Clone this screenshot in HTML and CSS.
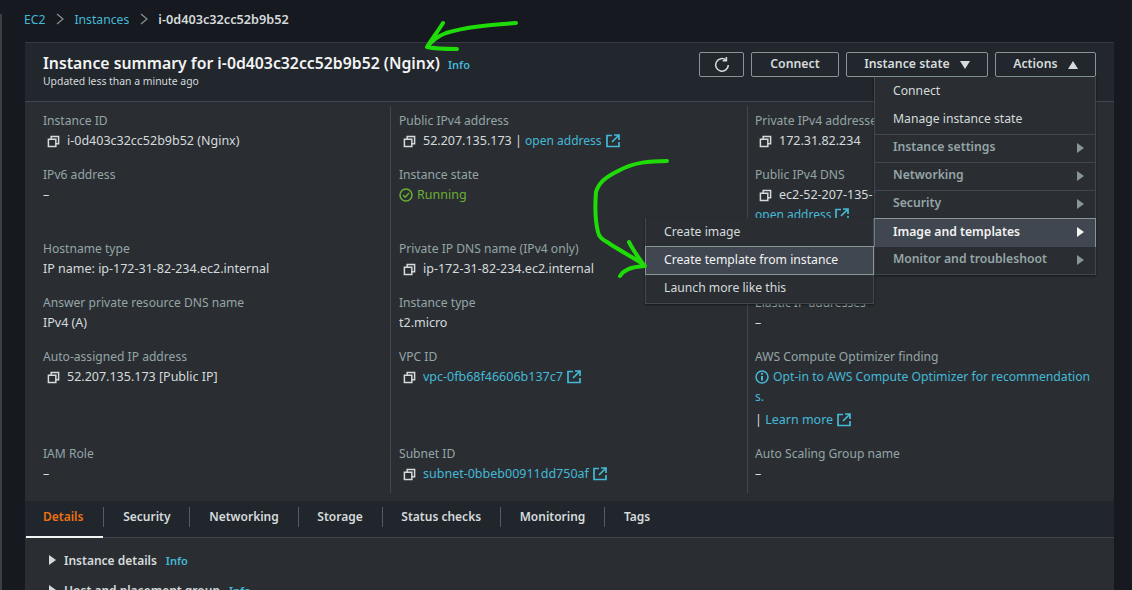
FILE: index.html
```html
<!DOCTYPE html>
<html lang="en">
  <head>
    <meta charset="UTF-8" />
    <title>Instance summary</title>
    <link rel="stylesheet" href="styles.css">
  </head>
  <body>
    <svg class="defs" width="0" height="0">
      <symbol id="copy" viewBox="0 0 14 14">
        <path d="M4.5 4V1.5h8v8H10M1.5 4.5h8v8h-8z" fill="none" stroke="currentColor" stroke-width="1.6"/>
      </symbol>
      <symbol id="ext" viewBox="0 0 14 14">
        <path d="M6 1.5H1v11h12V8M8 1h5v5M13 1L6 8" fill="none" stroke="currentColor" stroke-width="1.7"/>
      </symbol>
    </svg>

    <nav class="crumbs">
      <a href="#">EC2</a>
      <svg class="crumb-sep" width="8" height="12" viewBox="0 0 8 12"><path d="M1 1l6 5-6 5" fill="none" stroke="#879596" stroke-width="1.2"/></svg>
      <a href="#">Instances</a>
      <svg class="crumb-sep" width="8" height="12" viewBox="0 0 8 12"><path d="M1 1l6 5-6 5" fill="none" stroke="#879596" stroke-width="1.2"/></svg>
      <span class="crumb-now">i-0d403c32cc52b9b52</span>
    </nav>

    <div class="panel">
      <header class="head">
        <div class="head-text">
          <h1>Instance summary for i-0d403c32cc52b9b52 (Nginx) <a class="info" href="#">Info</a></h1>
          <p>Updated less than a minute ago</p>
        </div>
        <div class="btns">
          <button class="btn btn-icon">
            <svg width="18" height="18" viewBox="0 0 16 16"><path d="M13.6 8a5.6 5.6 0 1 1-2-4.4M11.9 0.8v3.4H8.6" fill="none" stroke="#d5dbdb" stroke-width="1.4"/></svg>
          </button>
          <button class="btn btn-connect">Connect</button>
          <button class="btn btn-state">Instance state <i class="tri-down"></i></button>
          <button class="btn btn-actions">Actions <i class="tri-up"></i></button>
        </div>
      </header>

      <div class="grid">
        <div class="col">
          <div class="f"><label>Instance ID</label><div class="val"><svg class="ico"><use href="#copy"/></svg>i-0d403c32cc52b9b52 (Nginx)</div></div>
          <div class="f"><label>IPv6 address</label><div class="val">–</div></div>
          <div class="f"><label>Hostname type</label><div class="val">IP name: ip-172-31-82-234.ec2.internal</div></div>
          <div class="f"><label>Answer private resource DNS name</label><div class="val">IPv4 (A)</div></div>
          <div class="f"><label>Auto-assigned IP address</label><div class="val"><svg class="ico"><use href="#copy"/></svg>52.207.135.173 [Public IP]</div></div>
          <div class="f"><label>IAM Role</label><div class="val">–</div></div>
        </div>
        <div class="col">
          <div class="f"><label>Public IPv4 address</label><div class="val"><svg class="ico"><use href="#copy"/></svg>52.207.135.173 <span class="pipe">|</span> <a class="short" href="#">open address</a><svg class="ext"><use href="#ext"/></svg></div></div>
          <div class="f"><label>Instance state</label><div class="val running">
            <svg class="check" width="14" height="14" viewBox="0 0 14 14"><circle cx="7" cy="7" r="6" fill="none" stroke="currentColor" stroke-width="1.5"/><path d="M4 7l2.2 2.2L10 5" fill="none" stroke="currentColor" stroke-width="1.5"/></svg>Running</div></div>
          <div class="f"><label>Private IP DNS name (IPv4 only)</label><div class="val"><svg class="ico"><use href="#copy"/></svg>ip-172-31-82-234.ec2.internal</div></div>
          <div class="f"><label>Instance type</label><div class="val">t2.micro</div></div>
          <div class="f"><label>VPC ID</label><div class="val"><svg class="ico"><use href="#copy"/></svg><a href="#">vpc-0fb68f46606b137c7</a><svg class="ext"><use href="#ext"/></svg></div></div>
          <div class="f"><label>Subnet ID</label><div class="val"><svg class="ico"><use href="#copy"/></svg><a href="#">subnet-0bbeb00911dd750af</a><svg class="ext"><use href="#ext"/></svg></div></div>
        </div>
        <div class="col">
          <div class="f"><label class="clip">Private IPv4 addresses</label><div class="val"><svg class="ico"><use href="#copy"/></svg>172.31.82.234</div></div>
          <div class="f"><label>Public IPv4 DNS</label><div class="val clip"><svg class="ico"><use href="#copy"/></svg>ec2-52-207-135-173.compute-1.amazonaws.com</div><div class="val"><a class="short" href="#">open address</a><svg class="ext"><use href="#ext"/></svg></div></div>
          <div class="f"></div>
          <div class="f"><label>Elastic IP addresses</label><div class="val">–</div></div>
          <div class="f"><label>AWS Compute Optimizer finding</label>
            <div class="val opt">
              <svg class="check" width="14" height="14" viewBox="0 0 14 14"><circle cx="7" cy="7" r="6" fill="none" stroke="currentColor" stroke-width="1.5"/><path d="M7 6v4.4" stroke="currentColor" stroke-width="2"/><circle cx="7" cy="3.9" r="1.1" fill="currentColor"/></svg><a href="#">Opt-in to AWS Compute Optimizer for recommendations.</a>
            </div>
            <div class="val val-3"><span class="pipe">|</span> <a href="#">Learn more</a><svg class="ext"><use href="#ext"/></svg></div>
          </div>
          <div class="f"><label>Auto Scaling Group name</label><div class="val">–</div></div>
        </div>
      </div>

      <div class="tabs">
        <a class="tab on" href="#">Details</a>
        <a class="tab" href="#">Security</a>
        <a class="tab" href="#">Networking</a>
        <a class="tab" href="#">Storage</a>
        <a class="tab" href="#">Status checks</a>
        <a class="tab" href="#">Monitoring</a>
        <a class="tab" href="#">Tags</a>
      </div>

      <div class="sec"><i class="tri-right"></i><b>Instance details</b><a class="info" href="#">Info</a></div>
      <div class="sec"><i class="tri-right"></i><b>Host and placement group</b><a class="info" href="#">Info</a></div>
    </div>

    <!-- menu -->
    <ul class="menu actions-menu">
      <li>Connect</li>
      <li>Manage instance state</li>
      <li class="sub">Instance settings</li>
      <li class="sub">Networking</li>
      <li class="sub">Security</li>
      <li class="sub sel">Image and templates</li>
      <li class="sub">Monitor and troubleshoot</li>
    </ul>
    <ul class="menu image-menu">
      <li>Create image</li>
      <li class="hov">Create template from instance</li>
      <li>Launch more like this</li>
    </ul>

    <svg class="ink" width="1132" height="590" viewBox="0 0 1132 590">
      <path d="M516 23C490 25 465 27 446 33C438 36 432 41 427 47C436 49 447 49 457 49M443 23C438 31 432 39 427 47"/>
      <path d="M667 161C650 161 634 162 618 171C606 177 599 182 596 192C595 205 595 220 598 232C599 238 604 240 610 244C621 251 632 257 643 264M629 242C633 250 638 257 643 264M620 276C624 270 630 267 645 266"/>
    </svg>
  </body>
</html>
```

FILE: styles.css
```css
* {
  box-sizing: border-box;
  margin: 0;
  padding: 0;
  list-style: none;
}
html, body {
  height: 590px;
  overflow: hidden;
}
body {
  background-color: #16191f;
  color: #d5dbdb;
  font-family: "Noto Sans", "Liberation Sans", sans-serif;
  font-size: 12.5px;
  position: relative;
  padding-left: 25px;
}
/* thin strip at the left edge of the window */
body::before {
  content: "";
  position: absolute;
  left: 0;
  top: 14px;
  bottom: 0;
  width: 2px;
  background-color: #3a3f44;
}
a {
  color: #44b9d6;
  text-decoration: none;
}
.defs {
  position: absolute;
}

/* breadcrumb */
.crumbs {
  height: 42px;
  display: flex;
  align-items: center;
  padding-bottom: 4px;
  margin-left: -1px;
  gap: 10.5px;
  font-size: 12.2px;
}
.crumb-now {
  font-weight: 600;
  font-size: 12.7px;
}

.panel {
  width: 1089px;
  height: 548px;
  background-color: #2a2e33;
  overflow: hidden;
}

/* header */
.head {
  height: 60px;
  background-color: #22262d;
  border-top: 1px solid #353a40;
  border-bottom: 1px solid #414750;
  display: flex;
  justify-content: space-between;
  padding: 9px 18px 0 18px;
}
.head h1 {
  font-size: 15.8px;
  font-weight: 600;
  color: #f2f3f3;
  line-height: 18px;
  margin-top: 2px;
  white-space: nowrap;
}
.head p {
  font-size: 10.4px;
  line-height: 14px;
}
.info {
  font-size: 11px;
  font-weight: 600;
  margin-left: 4px;
}
.btns {
  display: flex;
  gap: 7px;
  height: 25px;
}
.btn {
  height: 25px;
  padding-bottom: 3px;
  background: transparent;
  border: 1px solid #879596;
  border-radius: 2px;
  color: #d5dbdb;
  font-family: inherit;
  font-size: 12.3px;
  font-weight: 600;
}
.btn-icon {
  width: 45px;
  display: flex;
  align-items: center;
  justify-content: center;
  padding-bottom: 0;
}
.btn-connect { width: 88px; }
.btn-state { width: 142px; }
.btn-actions { width: 101px; }
.tri-down, .tri-up {
  display: inline-block;
  margin-left: 7px;
  border-left: 5px solid transparent;
  border-right: 5px solid transparent;
  vertical-align: -1px;
}
.tri-down { border-top: 8px solid #d5dbdb; }
.tri-up { border-bottom: 8px solid #d5dbdb; }

/* details */
.grid {
  height: 399px;
  display: grid;
  grid-template-columns: 365px 357px 1fr;
  padding: 4px 0 8px;
}
.col {
  display: grid;
  grid-template-rows: 54px 74px 54px 54px 97px 1fr;
  padding: 5px 0 0 18px;
  border-left: 1px solid #414750;
}
.col:first-child { border-left: 0; }
.col + .col { padding-left: 8px; }
.col + .col + .col { padding-left: 7px; }
.f label {
  display: block;
  color: #95a5a6;
  font-size: 12.1px;
  line-height: 20px;
}
.val {
  line-height: 20px;
  height: 20px;
  white-space: nowrap;
}
.clip {
  width: 119px;
  overflow: hidden;
  white-space: nowrap;
}
.ico {
  width: 13px;
  height: 13px;
  margin: 0 7px 0 4px;
  vertical-align: -3px;
  color: #d5dbdb;
}
.ext {
  width: 14px;
  height: 14px;
  margin-left: 4px;
  vertical-align: -3px;
  color: #44b9d6;
}
.short { font-size: 12px; }
.pipe { color: #d5dbdb; }
.running { color: #6aaf35; }
.check {
  margin-right: 4px;
  vertical-align: -3px;
}
.opt {
  height: 40px;
  color: #44b9d6;
  font-size: 12.2px;
  white-space: normal;
  width: 339px;
  word-break: break-all;
}
.val-3 { margin-top: 3px; }

/* tabs */
.tabs {
  height: 37px;
  padding-bottom: 4px;
  display: flex;
  align-items: center;
  background-color: #21252c;
  border-bottom: 1px solid #414750;
  position: relative;
}
.tab {
  color: #d5dbdb;
  font-weight: 600;
  font-size: 12px;
  line-height: 20px;
  padding: 0 18.8px;
  border-left: 1px solid #545b64;
}
.tab.on {
  color: #ec7211;
  border-left: 0;
  padding: 0 20px 0 18px;
}
.tab.on::after {
  content: "";
  position: absolute;
  left: 1px;
  bottom: -1px;
  width: 77px;
  height: 2px;
  background-color: #f2f3f3;
}

/* sections */
.sec {
  height: 30px;
  margin-top: 7px;
  padding-left: 24px;
  display: flex;
  align-items: center;
  gap: 5px;
  font-size: 12px;
}
.sec b { font-weight: 600; }
.sec + .sec { margin-top: 0; }
.tri-right {
  border-top: 5px solid transparent;
  border-bottom: 5px solid transparent;
  border-left: 7px solid #d5dbdb;
  margin-right: 3px;
}

/* dropdown menus */
.menu {
  position: absolute;
  background-color: #2a2e33;
  border: 1px solid #414750;
  border-top: 0;
  box-shadow: 0 1px 2px rgba(0, 0, 0, 0.5);
  font-size: 12.2px;
}
.actions-menu {
  left: 874px;
  top: 77px;
  width: 222px;
}
.image-menu {
  left: 645px;
  top: 218px;
  width: 229px;
}
.menu li {
  height: 28px;
  line-height: 27px;
  padding-left: 18px;
  position: relative;
}
.menu li:nth-child(2) { margin-bottom: 1px; }
.image-menu li:nth-child(2) { margin-bottom: 0; }
.image-menu li:last-child { line-height: 26px; }
.menu .sub {
  color: #95a5a6;
  font-weight: 600;
  border-top: 1px solid #414750;
  line-height: 24px;
}
.menu .sub::after {
  content: "";
  position: absolute;
  right: 11px;
  top: 8px;
  border-top: 5px solid transparent;
  border-bottom: 5px solid transparent;
  border-left: 7px solid #879596;
}
.menu .sel, .menu .hov {
  background-color: #414750;
  border: 1px solid #879596;
  color: #f2f3f3;
  margin: 0 -1px;
}
.menu .sel { height: 29px; margin-bottom: -1px; line-height: 25px; }
.menu .sel::after { border-left-color: #f2f3f3; }
.menu .hov {
  height: 29px;
  margin-bottom: -1px;
  line-height: 25px;
}

/* green marker arrows */
.ink {
  position: absolute;
  left: 0;
  top: 0;
  pointer-events: none;
}
.ink path {
  fill: none;
  stroke: #1fdc08;
  stroke-width: 4;
  stroke-linecap: round;
  stroke-linejoin: round;
}
```
